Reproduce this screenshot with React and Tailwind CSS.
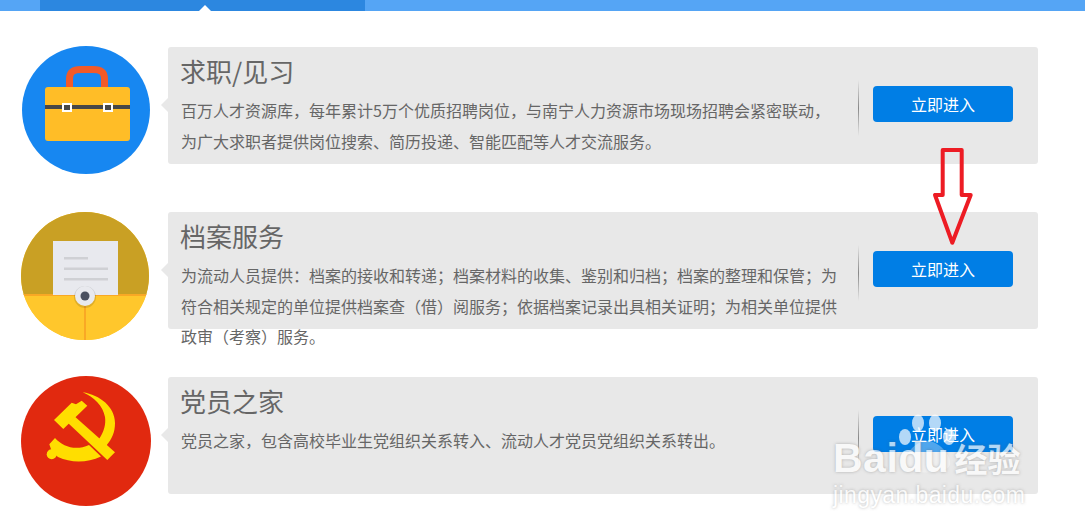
const font = '[font-family:"Noto_Sans_CJK_SC","Liberation_Sans",sans-serif]';

function Briefcase() {
  return (
    <svg viewBox="0 0 128 128" className="w-full h-full">
      <path d="M47.500 42 V33 C47.500 25 52 23.500 59 23.500 H71 C78 23.500 82.500 25 82.500 33 V42" fill="none" stroke="#f15a29" strokeWidth="7" />
      <rect x="23" y="41" width="85" height="54" rx="3" fill="#ffbd27" />
      <rect x="23" y="59" width="85" height="4" fill="#474747" />
      <rect x="41" y="58" width="8" height="7" fill="#474747" stroke="#fff" strokeWidth="2" />
      <rect x="82" y="58" width="8" height="7" fill="#474747" stroke="#fff" strokeWidth="2" />
    </svg>
  );
}

function Folder() {
  return (
    <svg viewBox="0 0 128 128" className="w-full h-full">
      <rect x="0" y="0" width="128" height="83" fill="#c9a024" />
      <rect x="0" y="83" width="128" height="45" fill="#ffc72c" />
      <rect x="0" y="82" width="128" height="2" fill="#f9a825" />
      <rect x="63" y="84" width="2" height="44" fill="#f9a825" />
      <rect x="32" y="29" width="65" height="54" fill="#e8e9ee" />
      <rect x="43" y="45" width="24" height="2.500" fill="#cfd0d4" />
      <rect x="43" y="55.500" width="44" height="2.500" fill="#cfd0d4" />
      <rect x="43" y="66" width="44" height="2.500" fill="#cfd0d4" />
      <circle cx="64" cy="85" r="11" fill="#000" opacity="0.12" />
      <circle cx="64" cy="84" r="10" fill="#e8e9ee" />
      <circle cx="64" cy="84" r="4.500" fill="#4a5060" />
    </svg>
  );
}

function PartyEmblem() {
  return (
    <svg viewBox="0 0 130 130" className="w-full h-full">
      <g fill="#ffde00">
        <path d="M33 44 L42.300 53 L66.300 29.700 L60.700 24.700 L55 28.300 L50.700 26.700 Z" />
        <path d="M47.300 47.300 L54 40.700 L94 76.300 L86.300 84 Z" />
        <path d="M61.700 16.300 C79 19 94 31 94 47 C94 56 91 63 85 70 L78 63 C83 56 85 48 84 41 C82 30 73 21 61.700 16.300 Z" />
        <path d="M34 62 C42 71 55 75 68 69 L80 80.500 C66 87 50 87 37 81 L31 76 L28.300 68.300 Z" />
        <circle cx="30.700" cy="78.300" r="5" />
      </g>
    </svg>
  );
}

function Row({ circle, bg, icon, title, children }) {
  return (
    <div className="flex items-start h-[165px]">
      <div className="w-[147px] shrink-0">
        <div className={`rounded-full overflow-hidden ${circle} ${bg}`}>{icon}</div>
      </div>
      <div className="relative w-[870px] h-[117px] shrink-0 bg-[#e8e8e8] rounded-[3px] flex">
        <div className="absolute left-[-7px] top-[51px] border-y-[7px] border-y-transparent border-r-[7px] border-r-[#e8e8e8]" />
        <div className="w-[670px] pl-[13px] pt-1.5 text-[#666]">
          <h3 className="text-[26px] leading-[36px] -ml-px">{title}</h3>
          <p className="text-[16px] leading-[30.5px] mt-1.5 w-[660px]">{children}</p>
        </div>
        <div className="w-px h-[56px] mt-[33px] ml-5 bg-gradient-to-b from-[#e8e8e8] via-[#888] to-[#e8e8e8]" />
        <button className="w-[140px] h-9 mt-[39px] ml-3.5 rounded bg-[#007ee5] text-white text-[16px]">立即进入</button>
      </div>
    </div>
  );
}

// baidu stamp sits over the last card
function Watermark() {
  return (
    <div className="absolute left-[833px] top-[413px] w-[200px] text-white [font-family:'Liberation_Sans',sans-serif] [text-shadow:0_0_3px_rgba(90,90,90,0.6)]">
      <svg viewBox="0 0 70 62" className="absolute left-[61px] top-0 w-[70px] h-[62px] opacity-70" fill="#fff">
        <ellipse cx="24" cy="10" rx="6" ry="8.500" />
        <ellipse cx="41" cy="10" rx="6" ry="8.500" />
        <ellipse cx="11" cy="24" rx="6" ry="8" />
        <ellipse cx="55" cy="24" rx="6" ry="8" />
        <path d="M33 28 C46 28 58 44 56 52 C53 62 14 62 11 52 C9 44 20 28 33 28 Z" opacity="0.45" />
      </svg>
      <div className="flex items-center gap-[5px] pt-[22px] opacity-70">
        <span className="text-[41px] leading-[46px] font-bold tracking-[0.5px]">Baidu</span>
        <span className={`text-[33px] leading-[46px] font-bold ${font}`}>经验</span>
      </div>
      <div className="text-[23px] leading-[30px] tracking-[0.4px] opacity-70 -mt-px">jingyan.baidu.com</div>
    </div>
  );
}

export default function App() {
  return (
    <div className={`relative h-[529px] overflow-hidden bg-white ${font}`}>
      <div className="h-[11px] bg-[#55a5f5] pl-10">
        <div className="relative w-[325px] h-[11px] bg-[#2c87e0]">
          <div className="absolute left-[159px] top-[5px] border-x-[6px] border-x-transparent border-b-[6px] border-b-white" />
        </div>
      </div>
      <div className="pt-9 pl-[21px]">
        <Row circle="w-[128px] h-[128px] ml-px -mt-px" bg="bg-[#1787f1]" icon={<Briefcase />} title="求职/见习">
          百万人才资源库，每年累计5万个优质招聘岗位，与南宁人力资源市场现场招聘会紧密联动，为广大求职者提供岗位搜索、简历投递、智能匹配等人才交流服务。
        </Row>
        <Row circle="w-[128px] h-[128px]" bg="bg-[#ffc72c]" icon={<Folder />} title="档案服务">
          为流动人员提供：档案的接收和转递；档案材料的收集、鉴别和归档；档案的整理和保管；为符合相关规定的单位提供档案查（借）阅服务；依据档案记录出具相关证明；为相关单位提供政审（考察）服务。
        </Row>
        <Row circle="w-[130px] h-[130px] -mt-px" bg="bg-[#e1290f]" icon={<PartyEmblem />} title="党员之家">
          党员之家，包含高校毕业生党组织关系转入、流动人才党员党组织关系转出。
        </Row>
      </div>
      <svg className="absolute left-[930px] top-[144px] w-[46px] h-[104px]" viewBox="930 144 46 104" fill="none" stroke="#ed1c24" strokeWidth="4" strokeLinejoin="round">
        <path d="M942.700 150 H961.700 V195 H970.700 L952.300 242.700 L935 195 H942.700 Z" />
      </svg>
      <Watermark />
    </div>
  );
}
